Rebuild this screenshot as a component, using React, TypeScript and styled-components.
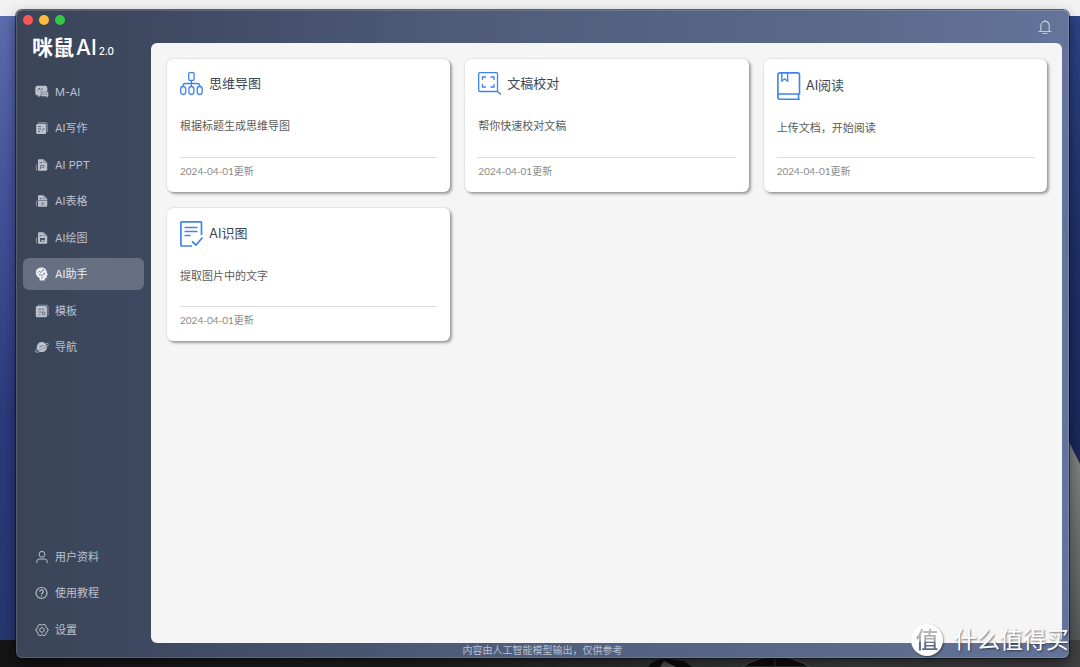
import React, { useState } from "react";
import styled, { createGlobalStyle } from "styled-components";

const GlobalStyle = createGlobalStyle`
  *, *::before, *::after { box-sizing: border-box; }
  body {
    margin: 0;
    font-family: Inter, "Noto Sans CJK SC", sans-serif;
    background: #17181a;
  }
  button { font: inherit; color: inherit; border: 0; background: none; padding: 0; cursor: pointer; }
  h1, h2, p { margin: 0; font-weight: 400; }
`;

const Desktop = styled.div`
  position: relative;
  display: flex;
  min-height: 100vh;
  padding: 10px 11px 9px 16px;
`;

const WallpaperSvg = styled.svg`
  position: absolute;
  inset: 0;
  width: 100%;
  height: 100%;
`;

const Window = styled.div`
  position: relative;
  flex: 1;
  min-width: 0;
  display: flex;
  flex-direction: column;
  border-radius: 6px;
  background: linear-gradient(90deg, #3b4557 0%, #3e4861 13%, #4e5c7a 42%, #5c6a8a 80%, #63739a 100%);
  box-shadow: inset 0 0 0 1px rgba(255, 255, 255, 0.14), 0 0 0 1px rgba(10, 12, 18, 0.6),
    0 6px 14px rgba(0, 0, 0, 0.5);
`;

const Body = styled.div`
  flex: 1;
  display: flex;
`;

const Sidebar = styled.aside`
  width: 135px;
  flex-shrink: 0;
  display: flex;
  flex-direction: column;
  padding: 5px 7px 0;
`;

const Lights = styled.div`
  display: flex;
  gap: 6px;
`;

const Light = styled.button<{ $color: string }>`
  width: 10px;
  height: 10px;
  border-radius: 50%;
  background: ${(p) => p.$color};
`;

const Logo = styled.h1`
  display: flex;
  align-items: baseline;
  gap: 2px;
  height: 20px;
  margin: 13px 0 17px 9px;
  color: #fff;
  font-size: 21px;
  font-weight: 700;
  line-height: 20px;
`;

const LogoLatin = styled.span`
  font-weight: 500;
`;

const LogoVersion = styled.span`
  font-size: 10px;
  font-weight: 500;
`;

const Nav = styled.nav<{ $height: number }>`
  display: flex;
  flex-direction: column;
  justify-content: space-between;
  height: ${(p) => p.$height}px;
`;

const Spacer = styled.div`
  flex: 1;
`;

const NavItem = styled.button<{ $active?: boolean; $height: number }>`
  display: flex;
  align-items: center;
  gap: 6px;
  height: ${(p) => p.$height}px;
  padding: 1px 0 0 12px;
  border-radius: 6px;
  font-size: 11px;
  line-height: 16px;
  color: ${(p) => (p.$active ? "#eceef2" : "#bcc1cc")};
  background: ${(p) => (p.$active ? "#667082" : "transparent")};
  svg { width: 14px; height: 14px; flex-shrink: 0; }
`;

const Main = styled.main`
  flex: 1;
  min-width: 0;
  display: flex;
  flex-direction: column;
  padding-right: 7px;
`;

const TopBar = styled.header`
  display: flex;
  align-items: center;
  justify-content: flex-end;
  height: 33px;
  padding-right: 10px;
`;

const BellButton = styled.button`
  display: flex;
  color: #c3cad9;
  svg { width: 14px; height: 16px; }
`;

const Panel = styled.section`
  flex: 1;
  padding: 16px 15px 16px 16px;
  border-radius: 6px;
  background: #f5f5f5;
`;

const Cards = styled.div`
  display: grid;
  grid-template-columns: repeat(3, minmax(0, 1fr));
  gap: 16px 15px;
`;

const Card = styled.article`
  display: flex;
  flex-direction: column;
  min-height: 133px;
  padding: 13px 13px 8px;
  border-radius: 6px;
  background: #fff;
  box-shadow: 0 0 2px rgba(0, 0, 0, 0.2), 2px 2px 3px rgba(0, 0, 0, 0.35);
`;

const CardHead = styled.div`
  display: flex;
  align-items: center;
  gap: 5px;
  color: #3f83ee;
  svg { display: block; }
`;

const CardTitle = styled.h2`
  padding-bottom: 2px;
  color: #3b4656;
  font-size: 13px;
  line-height: 20px;
`;

const CardText = styled.p`
  flex: 1;
  display: flex;
  align-items: center;
  padding-bottom: 1px;
  color: #5a5a5a;
  font-size: 11px;
  line-height: 16px;
`;

const CardDate = styled.p`
  border-top: 1px solid #dcdcdc;
  color: #8a8a8a;
  font-size: 10px;
  line-height: 26px;
  font-family: Lato, "Noto Sans CJK SC", sans-serif;
`;

const Footer = styled.footer`
  height: 15px;
  text-align: center;
  color: #b9c1d0;
  font-size: 10px;
  line-height: 14px;
`;

const Watermark = styled.div`
  position: absolute;
  right: 11px;
  bottom: 11px;
  display: flex;
  align-items: center;
  gap: 11px;
  height: 32px;
  color: #fff;
  font-size: 23px;
  line-height: 32px;
  text-shadow: 1px 1px 2px rgba(0, 0, 0, 0.55);
`;

const Badge = styled.span`
  width: 32px;
  height: 32px;
  border-radius: 50%;
  background: #fff;
  box-shadow: 1px 1px 2px rgba(0, 0, 0, 0.4);
  text-align: center;
  text-shadow: none;
`;

const BadgeGlyph = styled.span`
  color: transparent;
  font-weight: 500;
  background: linear-gradient(#c4c4c4 0%, #a3a5aa 55%, #5d6a88 60%);
  background-clip: text;
  -webkit-background-clip: text;
`;

const ink = "#465068";

const Wallpaper = () => (
  <WallpaperSvg viewBox="0 0 1080 667" preserveAspectRatio="none" aria-hidden="true">
    <defs>
      <linearGradient id="sky" x1="0" y1="0" x2="0" y2="1">
        <stop offset="0" stopColor="#5c6cae" />
        <stop offset="0.3" stopColor="#44539a" />
        <stop offset="0.65" stopColor="#2b3a7c" />
        <stop offset="1" stopColor="#26376f" />
      </linearGradient>
      <linearGradient id="night" x1="0" y1="0" x2="0" y2="1">
        <stop offset="0" stopColor="#2c4488" />
        <stop offset="0.3" stopColor="#21326e" />
        <stop offset="1" stopColor="#14224e" />
      </linearGradient>
      <linearGradient id="rock" x1="0" y1="0" x2="0" y2="1">
        <stop offset="0" stopColor="#858585" />
        <stop offset="1" stopColor="#55595a" />
      </linearGradient>
      <linearGradient id="ground" x1="0" y1="0" x2="1" y2="0">
        <stop offset="0" stopColor="#141414" />
        <stop offset="0.4" stopColor="#202021" />
        <stop offset="0.7" stopColor="#3c3d3e" />
        <stop offset="1" stopColor="#414142" />
      </linearGradient>
    </defs>
    <rect width="1080" height="16" fill="#f2f2f2" />
    <rect y="16" width="540" height="624" fill="url(#sky)" />
    <rect x="540" y="16" width="540" height="624" fill="url(#night)" />
    <path d="M1066 436 L1080 464 V640 H1066Z" fill="url(#rock)" />
    <rect y="640" width="1080" height="27" fill="url(#ground)" />
    <path d="M648 667 Q654 658 668 659 L684 661 L692 667Z" fill="#0d0d0e" />
    <path d="M660 667 L664 661 L676 667Z" fill="#515254" />
    <path d="M742 667 Q775 646 810 667Z" fill="#101011" stroke="#555658" />
    <path d="M775 655V667" stroke="#3a3a3c" />
  </WallpaperSvg>
);

const DocBase = ({ children }: { children: React.ReactNode }) => (
  <svg viewBox="0 0 14 14" fill="none" aria-hidden="true">
    <path d="M2 6.500C1 7.500 .9 11 2 12.500" stroke="currentColor" strokeWidth=".7" />
    <path d="M3 2.200Q3 1.200 4 1.200H8.500L12.200 4.800V11.800Q12.200 12.800 11.200 12.800H4Q3 12.800 3 11.800Z" fill="currentColor" />
    <path d="M8.600 1.500V4.700H12" stroke={ink} strokeWidth=".4" />
    <path d="M4.500 4.700H7" stroke={ink} strokeWidth=".8" />
    {children}
  </svg>
);

const ChatIcon = () => (
  <svg viewBox="0 0 14 14" fill="none" aria-hidden="true">
    <path d="M2.500 .8H10Q12.300 .8 12.300 3V8Q12.300 10.500 10 10.500H5.500L3.500 12.500V10.500H2.500Q.3 10.500 .3 8V3Q.3 .8 2.500 .8Z" fill="currentColor" />
    <path d="M3 5.300L4.200 3L5.400 5.300M7 3V5.300" stroke={ink} strokeWidth=".7" />
    <path d="M6 7H12.500Q13.500 7 13.500 8V10.500Q13.500 11.500 12.800 11.500L12.500 13L11 11.500H7.500Q6 11.500 6 10.500Z" fill="currentColor" stroke={ink} strokeWidth=".5" />
    <path d="M7.500 9.300H9M10.500 9.300H12" stroke={ink} strokeWidth=".8" />
  </svg>
);

const WriteIcon = () => (
  <svg viewBox="0 0 14 14" fill="none" aria-hidden="true">
    <path d="M3 1.700H11Q12.300 1.700 12.300 3V11" stroke="currentColor" strokeWidth=".6" />
    <rect x="1.200" y="2.700" width="10" height="10.300" rx="1.500" fill="currentColor" />
    <path d="M3 5.500H6M3 8H6M7 9.800L9.500 7M3 10.500H5" stroke={ink} strokeWidth=".8" />
  </svg>
);

const PptIcon = () => (
  <DocBase>
    <path d="M5.500 11V7.500H9V9.300H6" stroke={ink} strokeWidth=".6" />
  </DocBase>
);

const SheetIcon = () => (
  <DocBase>
    <path d="M3.500 6.500H11.800M6 8L9.300 11.500M9.300 8L6 11.500" stroke={ink} strokeWidth=".6" />
  </DocBase>
);

const PaintIcon = () => (
  <DocBase>
    <rect x="5" y="7" width="5" height="3.800" fill={ink} />
    <path d="M5.500 10.500L7.200 8.500L8.300 9.600L9.200 8.800L10.200 10.500Z" fill="currentColor" />
  </DocBase>
);

const HeadIcon = () => (
  <svg viewBox="0 0 14 14" fill="none" aria-hidden="true">
    <path d="M6 .6C9.500 .4 11.800 2.600 11.800 5.400L12.900 8L11.700 8.600V10.300Q11.700 11.300 10.600 11.300H9.800V13.500H4.500V11C2.500 9.800 .8 8.500 .8 5.800C.8 2.600 3 .8 6 .6Z" fill="currentColor" />
    <path d="M2.500 5.500L4.500 4.200L6 5.500L7.800 3.300M3.500 8L5.500 7L7.200 9L9 6.800M7 9.500V11.500" stroke="#667082" strokeWidth=".7" />
    <circle cx="8.300" cy="3" r=".8" fill="#667082" />
    <circle cx="9.300" cy="6.500" r=".8" fill="#667082" />
  </svg>
);

const TemplateIcon = () => (
  <svg viewBox="0 0 14 14" fill="none" aria-hidden="true">
    <path d="M2.500 1.200H11.500Q13 1.200 13 2.700V11.500" stroke="currentColor" strokeWidth=".6" />
    <rect x=".8" y="2" width="11.200" height="11.200" rx="1.500" fill="currentColor" />
    <path d="M3.500 5.200H6M7 5.200H9" stroke={ink} strokeWidth=".8" />
    <path d="M3.500 8H9.800M3.500 10.800H5.500M7.500 8V10.800H9.800V8" stroke={ink} strokeWidth=".6" />
  </svg>
);

const PlanetIcon = () => (
  <svg viewBox="0 0 14 14" fill="none" aria-hidden="true">
    <circle cx="6.800" cy="7.200" r="5.100" fill="currentColor" />
    <path d="M2 9C.6 10.600 .2 11.600 .8 12C2.200 12.800 6 11.400 9.400 9C12.400 6.600 13.700 4.400 13.200 3.600C12.900 3.200 12.200 3.200 11.200 3.600" stroke="currentColor" strokeWidth=".8" />
    <path d="M2.200 10.600C5.500 10.400 10 7.800 11.900 5.400" stroke={ink} strokeWidth=".4" />
    <path d="M4.500 6.500H6.500M7.500 5.500H8.500" stroke={ink} strokeWidth=".8" />
  </svg>
);

const UserIcon = () => (
  <svg viewBox="0 0 14 14" fill="none" stroke="currentColor" strokeWidth="1" aria-hidden="true">
    <circle cx="7" cy="4.300" r="2.900" />
    <path d="M1.800 13V11.700Q1.800 9 4.500 9H9.500Q12.200 9 12.200 11.700V13" />
  </svg>
);

const HelpIcon = () => (
  <svg viewBox="0 0 14 14" fill="none" stroke="currentColor" strokeWidth="1.200" aria-hidden="true">
    <circle cx="6.500" cy="7" r="5.500" />
    <path d="M4.700 5.700C4.700 3.300 8.300 3.400 8.300 5.600C8.300 7 6.500 7 6.500 8.600M6.500 9.500V10.700" />
  </svg>
);

const GearIcon = () => (
  <svg viewBox="0 0 14 14" fill="none" stroke="currentColor" strokeWidth="1" aria-hidden="true">
    <path d="M5 1.300L7 2.300L9 1.300L11 2.500L11.200 4.700L13 6V8L11.200 9.300L11 11.500L9 12.700L7 11.700L5 12.700L3 11.500L2.800 9.300L1 8V6L2.800 4.700L3 2.500Z" strokeLinejoin="round" />
    <circle cx="7" cy="7" r="2.300" />
  </svg>
);

const BellIcon = () => (
  <svg viewBox="0 0 14 16" fill="none" stroke="currentColor" strokeWidth="1.200" aria-hidden="true">
    <path d="M7 1V2.500M2.800 12V7C2.800 .9 11.200 .9 11.200 7V12M1 12.500H13M5 14.500H9" strokeLinecap="round" />
  </svg>
);

const MindMapIcon = () => (
  <svg width="24" height="24" viewBox="0 0 24 24" fill="none" stroke="currentColor" strokeWidth="1.300" aria-hidden="true">
    <rect x="8.700" y=".7" width="5.400" height="7.600" rx="1" />
    <path d="M11.400 8.300V14.500M3 14.500V13.800Q3 11.500 5.500 11.500H17.300Q19.800 11.500 19.800 13.800V14.500" />
    <rect x=".7" y="14.500" width="5" height="8" rx="2.400" />
    <rect x="8.900" y="14.500" width="5" height="8" rx="2.400" />
    <rect x="17.200" y="14.500" width="5" height="8" rx="2.400" />
  </svg>
);

const ProofIcon = () => (
  <svg width="24" height="24" viewBox="0 0 24 24" fill="none" stroke="currentColor" strokeWidth="1.300" aria-hidden="true">
    <rect x=".7" y=".7" width="18.800" height="18.800" rx="1" />
    <path d="M19 19L22.800 22.500" strokeWidth="1.500" />
    <path d="M4.500 8V5H8M12.500 5H16V8M16 12V15H12.500M8 15H4.500V12" strokeWidth="1.300" />
  </svg>
);

const BookIcon = () => (
  <svg width="24" height="28" viewBox="0 0 24 28" fill="none" stroke="currentColor" strokeWidth="1.600" aria-hidden="true">
    <path d="M22.800 27.200H3Q.9 27.200 .9 25V3Q.9 .9 3 .9H20.500Q22.500 .9 22.500 3V22H3Q.9 22 .9 24.500M21.500 22V27" />
    <path d="M4.800 1V9L7.600 7L10.600 9V1" strokeWidth="1.400" />
  </svg>
);

const DocCheckIcon = () => (
  <svg width="24" height="26" viewBox="0 0 24 26" fill="none" stroke="currentColor" strokeWidth="1.700" aria-hidden="true">
    <path d="M21.500 14V2Q21.500 .9 20.500 .9H1.900Q.9 .9 .9 2V24Q.9 25 1.900 25H12" />
    <path d="M4.500 6.500H17.500M4.500 10.500H17.500M4.500 14.500H10.500M12 20.500L16 24L22.500 16.500" />
  </svg>
);

const tools = [
  { label: "M-AI", Icon: ChatIcon },
  { label: "AI写作", Icon: WriteIcon },
  { label: "AI PPT", Icon: PptIcon },
  { label: "AI表格", Icon: SheetIcon },
  { label: "AI绘图", Icon: PaintIcon },
  { label: "AI助手", Icon: HeadIcon },
  { label: "模板", Icon: TemplateIcon },
  { label: "导航", Icon: PlanetIcon },
];

const account = [
  { label: "用户资料", Icon: UserIcon },
  { label: "使用教程", Icon: HelpIcon },
  { label: "设置", Icon: GearIcon },
];

const cards = [
  { title: "思维导图", text: "根据标题生成思维导图", Icon: MindMapIcon },
  { title: "文稿校对", text: "帮你快速校对文稿", Icon: ProofIcon },
  { title: "AI阅读", text: "上传文档，开始阅读", Icon: BookIcon },
  { title: "AI识图", text: "提取图片中的文字", Icon: DocCheckIcon },
];

export default function App() {
  const [active, setActive] = useState("AI助手");
  return (
    <Desktop lang="zh-CN">
      <GlobalStyle />
      <Wallpaper />
      <Window>
        <Body>
          <Sidebar>
            <Lights>
              <Light $color="#fc5753" aria-label="关闭" />
              <Light $color="#fdbc40" aria-label="最小化" />
              <Light $color="#34c748" aria-label="全屏" />
            </Lights>
            <Logo>
              咪鼠<LogoLatin>AI</LogoLatin>
              <LogoVersion>2.0</LogoVersion>
            </Logo>
            <Nav $height={288}>
              {tools.map(({ label, Icon }) => (
                <NavItem key={label} $height={32} $active={label === active} onClick={() => setActive(label)}>
                  <Icon />
                  {label}
                </NavItem>
              ))}
            </Nav>
            <Spacer />
            <Nav $height={101}>
              {account.map(({ label, Icon }) => (
                <NavItem key={label} $height={28} $active={label === active} onClick={() => setActive(label)}>
                  <Icon />
                  {label}
                </NavItem>
              ))}
            </Nav>
          </Sidebar>
          <Main>
            <TopBar>
              <BellButton aria-label="通知">
                <BellIcon />
              </BellButton>
            </TopBar>
            <Panel>
              <Cards>
                {cards.map(({ title, text, Icon }) => (
                  <Card key={title}>
                    <CardHead>
                      <Icon />
                      <CardTitle>{title}</CardTitle>
                    </CardHead>
                    <CardText>{text}</CardText>
                    <CardDate>2024-04-01更新</CardDate>
                  </Card>
                ))}
              </Cards>
            </Panel>
          </Main>
        </Body>
        <Footer>内容由人工智能模型输出，仅供参考</Footer>
      </Window>
      <Watermark>
        <Badge>
          <BadgeGlyph>值</BadgeGlyph>
        </Badge>
        什么值得买
      </Watermark>
    </Desktop>
  );
}
